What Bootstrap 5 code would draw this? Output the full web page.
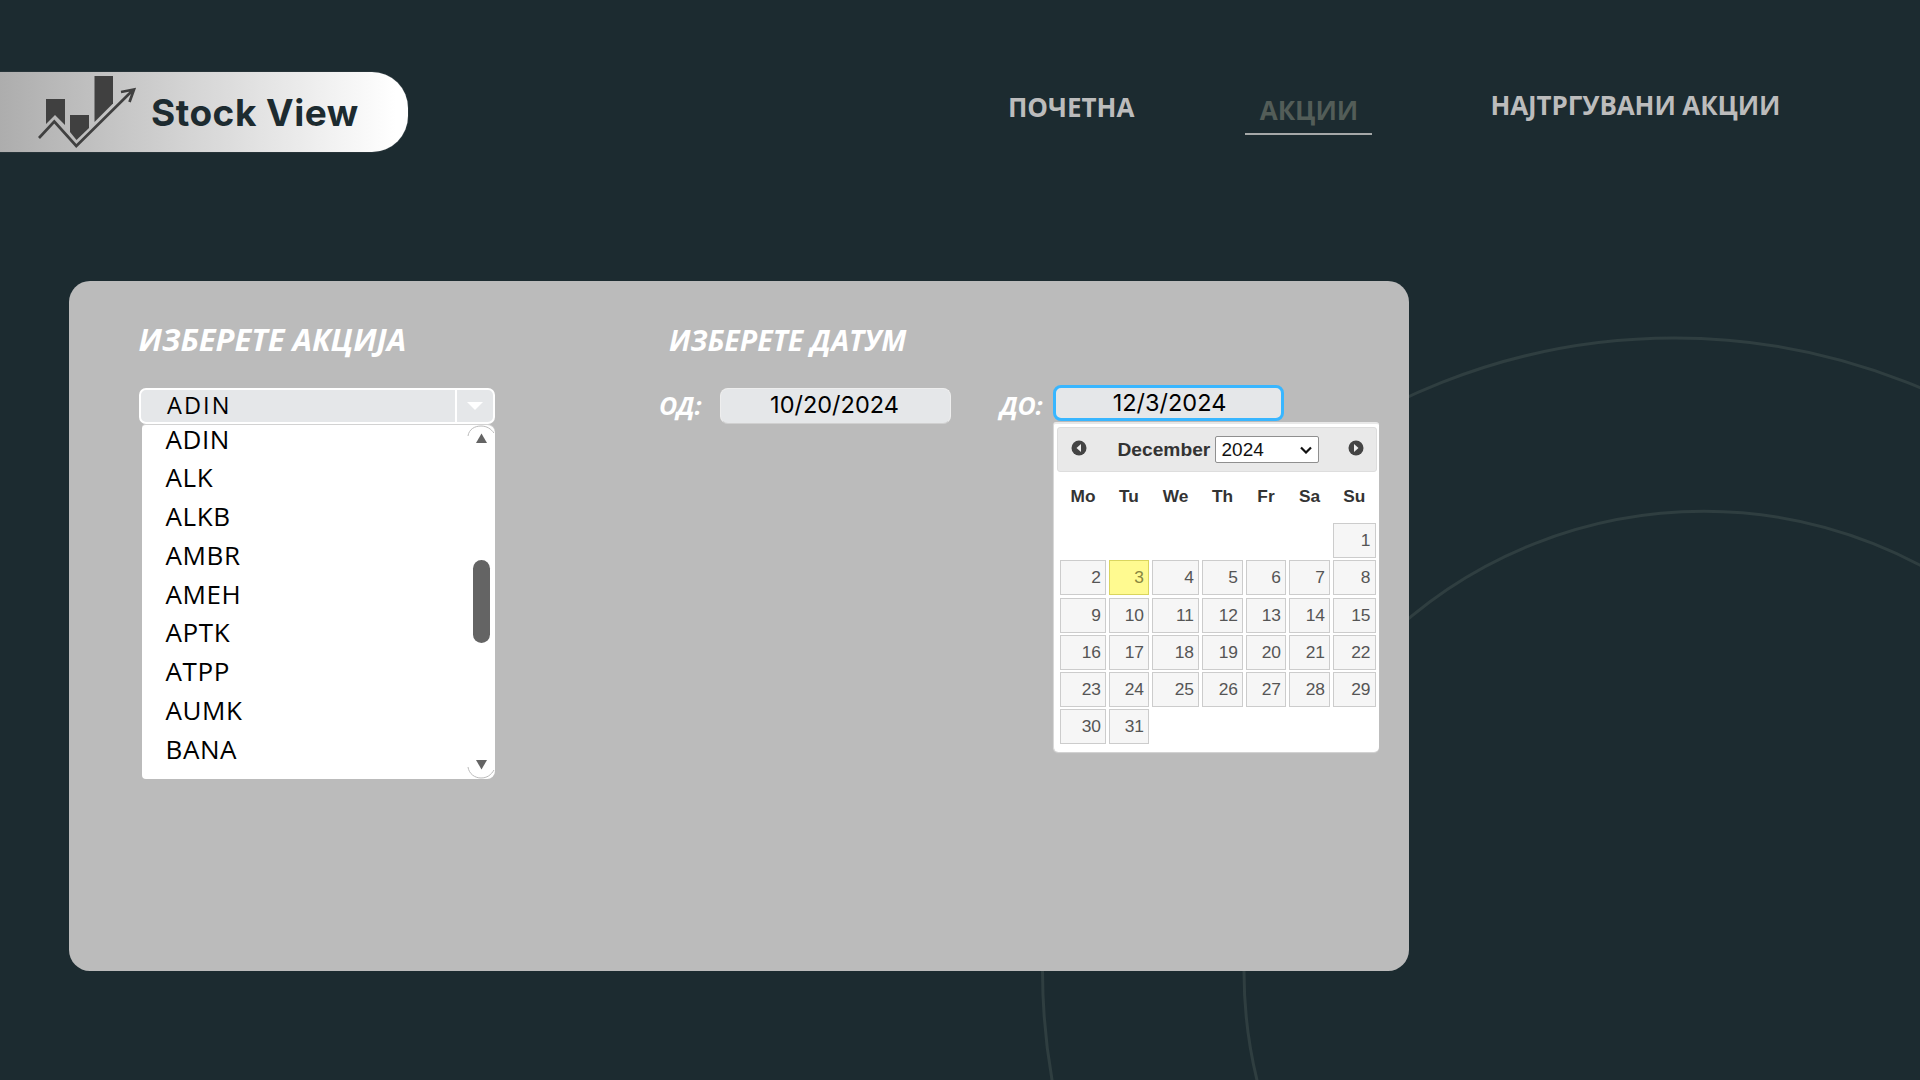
<!DOCTYPE html>
<html lang="mk">
<head>
<meta charset="utf-8">
<title>Stock View</title>
<link href="https://cdn.jsdelivr.net/npm/bootstrap@5.3.0/dist/css/bootstrap.min.css" rel="stylesheet">
<style>
body{width:1920px;height:1080px;overflow:hidden;background:#1c2b30;font-family:"Open Sans","Noto Sans",sans-serif;color:#fff}
.rings{inset:0;z-index:0}
.page-top{height:281px;padding-top:72px}
.brand-pill{width:408px;height:80px;border-radius:0 36px 36px 0;background:linear-gradient(90deg,#adadad,#fff 97%);box-shadow:0 0 1px #8a9092;padding-left:38px}
.brand-name{font:700 37px/44px Inter,sans-serif;color:#1d2b30;letter-spacing:.5px;margin-left:15px;margin-top:2px;white-space:nowrap}
.top-link{font-weight:700;font-size:26px;line-height:30px;color:#bcbcbc;padding:0;white-space:nowrap}
.link-home{margin:20px 0 0 600px}
.link-stocks{margin:23px 0 0 111px;width:127px;height:40px;text-align:center;color:#535d58;border-bottom:2px solid #a5a8a8}
.link-top{margin:18px 0 0 118px;letter-spacing:-.1px}
.panel{width:1340px;height:690px;margin-left:68.5px;border-radius:21px;background:#bbb}
.stock-side{margin-left:70px;width:356px;padding-top:39px}
.date-from{margin-left:164.5px;width:292px;padding-top:39.5px}
.date-to{margin-left:49px;width:380px;padding-top:104px}
.ttl{font-style:italic;font-weight:700;line-height:38px;white-space:nowrap;margin:0}
.lbl{font-style:italic;font-weight:700;font-size:25px;line-height:34px;white-space:nowrap;letter-spacing:-.4px}
.picker{height:36px;margin-top:29.5px;background:#e5e7e9;border:2px solid #fff;border-radius:7px;color:#000}
.picker-text{font:23.5px/30px "Open Sans","Noto Sans",sans-serif;letter-spacing:2.1px;padding-left:26.500px}
.picker-btn{width:38px;border-left:2px solid #fff}
.options{margin:0 0 0 3px;width:353px;height:355px;background:#fff;border-radius:4px 8px 8px 4px;border-top:1px solid #d2d2d2;color:#000;padding-left:24px}
.options li{font:400 26px/38.8px "Open Sans","Noto Sans",sans-serif;letter-spacing:.6px}
.options ul{margin-top:-5px}
.scroll-col{width:28px}
.thumb{width:17px;height:83px;border-radius:9px;background:#646464;margin-left:6px}
.date-box{font:23.5px/32px Inter,sans-serif;color:#000;background:#e5e7e9;text-align:center;height:36px;border-radius:8px;padding-right:2px}
.from-box{width:231px;border:1px solid #eee;border-bottom-color:#d0d0d0}
.to-box{width:231px;border:3px solid #38b6ff;line-height:29px;padding-right:0;padding-left:3px}
.cal{width:326px;height:330px;margin-left:52.5px;background:#fff;border-radius:3px 3px 5px 5px;border-top:2px solid #e8e8e8;border-left:1px solid #d8d8d8;box-shadow:0 1px 1px #d5d5d5;font-family:"Liberation Sans",sans-serif;padding:3px 0 0 3px}
.cal-bar{width:320px;height:45px;background:#e9e9e9;border:1px solid #ddd;border-radius:3px;color:#333}
.cal-month{font-weight:700;font-size:19.2px;width:93px;margin-left:31px;line-height:44px}
.cal-year{width:104px;height:27px;margin-left:4px;border:1px solid #8f8f8f;border-radius:2px;background:#fff;color:#111;font-size:19px;line-height:25px;padding:0 6px}
.week{display:grid;grid-template-columns:49px 43px 50px 44px 43px 44px 45.5px;margin-left:3px}
.dow{font-weight:700;font-size:17.3px;line-height:20px;color:#333;text-align:center;padding-right:2px;margin:14px 0 17px}
.day{height:35px;margin:0 2.5px 2.3px 0;border:1px solid #ccc;background:#f6f6f6;color:#555;font-size:17.4px;line-height:33px;text-align:right;padding-right:4px}
.day-now{background:#fffa90;border-color:#dad55e;color:#8a8740}
</style>
<script src="https://cdn.jsdelivr.net/npm/bootstrap@5.3.0/dist/js/bootstrap.bundle.min.js"></script>
</head>
<body class="position-relative">
<svg class="rings position-absolute" width="1920" height="1080" fill="none" stroke="#2f3e40" stroke-width="3"><circle cx="1674.500" cy="970" r="632"/><circle cx="1704" cy="971.3" r="460"/></svg>
<header class="page-top d-flex align-items-start position-relative">
  <a class="brand-pill d-flex align-items-center text-decoration-none flex-shrink-0" href="#">
    <svg width="98" height="74" viewBox="38 75 98 74"><g fill="#404040"><path d="M46 99h19v26l-10-10-9 9z"/><path d="M70 115h19v13l-12.500 12L70 132z"/><path d="M94.500 76H113v27.500L94.500 122z"/></g><path d="M39 138l15.300-16.500L76.300 146 133 90M121 92l13-2.500-4.500 12.500" fill="none" stroke="#404040" stroke-width="2.700"/></svg>
    <span class="brand-name">Stock View</span>
  </a>
  <nav class="nav align-items-start flex-nowrap">
    <a class="nav-link top-link link-home" href="#">ПОЧЕТНА</a>
    <a class="nav-link top-link link-stocks" href="#">АКЦИИ</a>
    <a class="nav-link top-link link-top" href="#">НАЈТРГУВАНИ АКЦИИ</a>
  </nav>
</header>
<main class="panel d-flex align-items-start position-relative">
  <section class="stock-side flex-shrink-0">
    <h1 class="ttl" style="font-size:31px">ИЗБЕРЕТЕ АКЦИЈА</h1>
    <div class="picker d-flex">
      <span class="picker-text flex-grow-1">ADIN</span>
      <span class="picker-btn d-flex align-items-center justify-content-center"><svg width="16" height="8"><path d="M0 0h16L8 8z" fill="#fff"/></svg></span>
    </div>
    <div class="options d-flex justify-content-between">
      <ul class="list-unstyled mb-0"><li>ADIN</li><li>ALK</li><li>ALKB</li><li>AMBR</li><li>AMEH</li><li>APTK</li><li>ATPP</li><li>AUMK</li><li>BANA</li></ul>
      <div class="scroll-col d-flex flex-column">
        <svg width="28" height="26"><path d="M1 11C2 4 8 1 14 1s10 3 13 7" fill="none" stroke="#bbb"/><path d="M9 18L14.500 8.500 20 18z" fill="#646464"/></svg>
        <div class="thumb" style="margin-top:109px"></div>
        <svg class="mt-auto" width="28" height="26"><path d="M1 14c1 7 7 11 13 11s10-3 13-8" fill="none" stroke="#bbb"/><path d="M9 7h11l-5.500 9.500z" fill="#646464"/></svg>
      </div>
    </div>
  </section>
  <section class="date-from flex-shrink-0">
    <h2 class="ttl" style="font-size:28.5px;margin-left:10px">ИЗБЕРЕТЕ ДАТУМ</h2>
    <div class="d-flex justify-content-between" style="margin-top:29px"><label class="lbl">ОД:</label><div class="date-box from-box">10/20/2024</div></div>
  </section>
  <section class="date-to flex-shrink-0">
    <div class="d-flex"><label class="lbl" style="width:52.5px;padding-top:3px">ДО:</label><div class="date-box to-box">12/3/2024</div></div>
    <div class="cal">
      <div class="cal-bar d-flex align-items-center">
        <svg width="16" height="16" style="margin:-4px 0 0 13px"><circle cx="8" cy="8" r="7.500" fill="#444"/><path d="M10 4v8L5.500 8z" fill="#eee"/></svg>
        <span class="cal-month">December</span>
        <span class="cal-year d-flex align-items-center justify-content-between">2024<svg width="12" height="8"><path d="M1 1.500l5 5 5-5" fill="none" stroke="#111" stroke-width="2.200"/></svg></span>
        <svg width="16" height="16" style="margin:-4px 0 0 29px"><circle cx="8" cy="8" r="7.500" fill="#444"/><path d="M6 4v8l4.500-4z" fill="#eee"/></svg>
      </div>
      <div class="week"><div class="dow">Mo</div><div class="dow">Tu</div><div class="dow">We</div><div class="dow">Th</div><div class="dow">Fr</div><div class="dow">Sa</div><div class="dow">Su</div></div>
      <div class="week">
        <div class="day" style="grid-column:7">1</div>
        <div class="day">2</div><div class="day day-now">3</div><div class="day">4</div><div class="day">5</div><div class="day">6</div><div class="day">7</div><div class="day">8</div>
        <div class="day">9</div><div class="day">10</div><div class="day">11</div><div class="day">12</div><div class="day">13</div><div class="day">14</div><div class="day">15</div>
        <div class="day">16</div><div class="day">17</div><div class="day">18</div><div class="day">19</div><div class="day">20</div><div class="day">21</div><div class="day">22</div>
        <div class="day">23</div><div class="day">24</div><div class="day">25</div><div class="day">26</div><div class="day">27</div><div class="day">28</div><div class="day">29</div>
        <div class="day">30</div><div class="day">31</div>
      </div>
    </div>
  </section>
</main>
</body>
</html>
